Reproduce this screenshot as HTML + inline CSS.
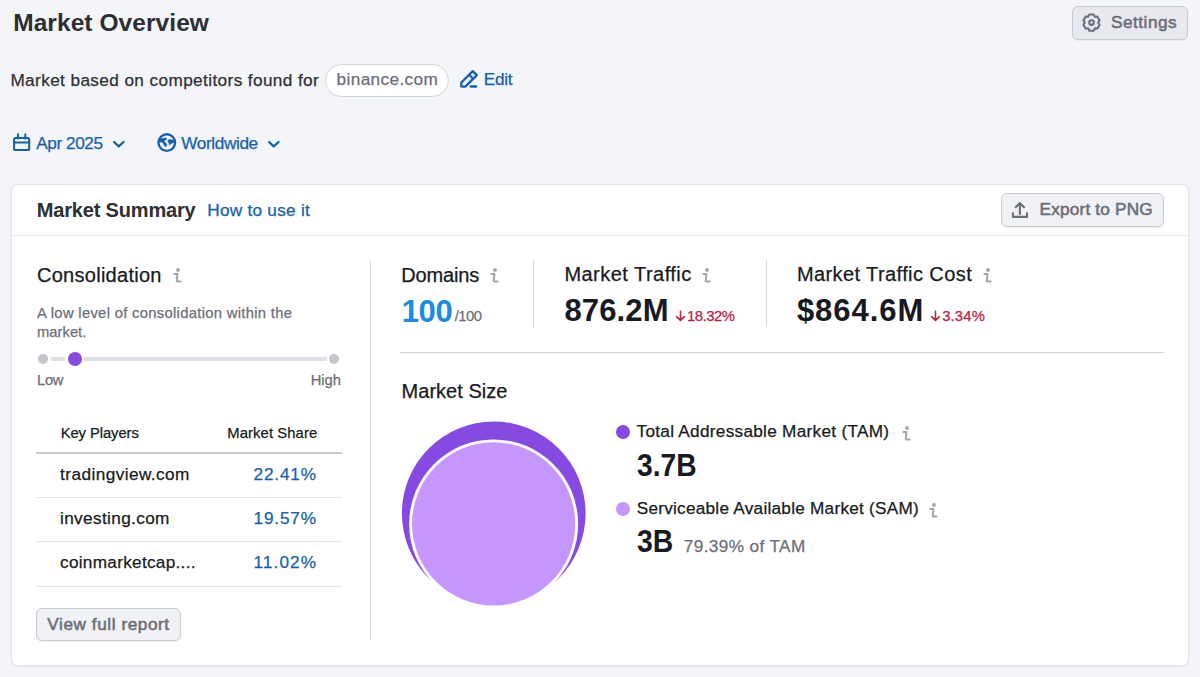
<!DOCTYPE html>
<html><head><meta charset="utf-8"><style>
html,body{margin:0;padding:0;}
body{width:1200px;height:677px;overflow:hidden;background:#f4f5f9;position:relative;font-family:"Liberation Sans",sans-serif;}
.t{position:absolute;white-space:nowrap;-webkit-text-stroke:0.25px currentColor;}
.box{position:absolute;box-sizing:border-box;}
.ic{position:absolute;overflow:visible;}
.btn{border:1px solid #c8cad1;border-radius:6px;background:#f0f1f4;box-shadow:0 1px 1px rgba(0,0,0,0.05);}
.card{background:#fff;border:1px solid #e4e5ea;border-radius:7px;box-shadow:0 1px 2px rgba(0,0,0,0.08);}
</style></head><body>
<div class="t" style="left:13.20px;top:10.66px;font-size:24.5px;line-height:24.5px;letter-spacing:0.068px;color:#2e2f33;font-weight:700;-webkit-text-stroke:0;">Market Overview</div>
<div class="t" style="left:10.40px;top:72.34px;font-size:17.2px;line-height:17.2px;letter-spacing:0.393px;color:#2e3034;">Market based on competitors found for</div>
<div class="box" style="left:325px;top:64px;width:124px;height:33px;border-radius:17px;border:1px solid #d3d5dc;background:#fff"></div>
<div class="t" style="left:336.60px;top:71.24px;font-size:17.2px;line-height:17.2px;letter-spacing:0.370px;color:#6c6e79;">binance.com</div>
<div class="t" style="left:483.80px;top:71.24px;font-size:17.2px;line-height:17.2px;letter-spacing:-0.283px;color:#1461ab;">Edit</div>
<div class="t" style="left:36.25px;top:134.69px;font-size:17.2px;line-height:17.2px;letter-spacing:-0.436px;color:#1461ab;">Apr 2025</div>
<div class="t" style="left:181.25px;top:134.69px;font-size:17.2px;line-height:17.2px;letter-spacing:-0.375px;color:#1461ab;">Worldwide</div>
<div class="box btn" style="left:1072px;top:6px;width:116px;height:34px;background:#e8e9ee"></div>
<div class="t" style="left:1111.00px;top:13.94px;font-size:17.2px;line-height:17.2px;letter-spacing:0.507px;color:#6c6e79;-webkit-text-stroke:0.55px currentColor;">Settings</div>
<div class="box card" style="left:11px;top:183.5px;width:1177.5px;height:482px;"></div>
<div class="box" style="left:12.5px;top:235px;width:1174.5px;height:1px;background:#e3e4ea"></div>
<div class="t" style="left:36.80px;top:200.17px;font-size:20px;line-height:20px;letter-spacing:-0.177px;color:#2e2f33;font-weight:700;-webkit-text-stroke:0;">Market Summary</div>
<div class="t" style="left:207.30px;top:201.74px;font-size:17.2px;line-height:17.2px;letter-spacing:0.258px;color:#1461ab;">How to use it</div>
<div class="box btn" style="left:1001px;top:193px;width:163px;height:34px;"></div>
<div class="t" style="left:1039.50px;top:200.94px;font-size:17.2px;line-height:17.2px;letter-spacing:0.200px;color:#6c6e79;-webkit-text-stroke:0.55px currentColor;">Export to PNG</div>
<div class="t" style="left:37.00px;top:265.07px;font-size:20px;line-height:20px;letter-spacing:0.275px;color:#171a22;">Consolidation</div>
<div class="t" style="left:37.00px;top:305.67px;font-size:14.8px;line-height:14.8px;letter-spacing:0.303px;color:#6c6e79;">A low level of consolidation within the</div>
<div class="t" style="left:37.00px;top:324.67px;font-size:14.8px;line-height:14.8px;letter-spacing:0.000px;color:#6c6e79;">market.</div>
<div class="t" style="left:37.00px;top:373.22px;font-size:14.8px;line-height:14.8px;letter-spacing:-0.300px;color:#6c6e79;">Low</div>
<div class="t" style="left:310.80px;top:372.97px;font-size:14.8px;line-height:14.8px;letter-spacing:-0.117px;color:#6c6e79;">High</div>
<div class="t" style="left:60.70px;top:426.47px;font-size:14.8px;line-height:14.8px;letter-spacing:-0.085px;color:#171a22;">Key Players</div>
<div class="t" style="left:227.30px;top:426.47px;font-size:14.8px;line-height:14.8px;letter-spacing:0.095px;color:#171a22;">Market Share</div>
<div class="t" style="left:60.00px;top:466.24px;font-size:17.2px;line-height:17.2px;letter-spacing:0.443px;color:#171a22;">tradingview.com</div>
<div class="t" style="left:253.50px;top:466.24px;font-size:17.2px;line-height:17.2px;letter-spacing:0.830px;color:#1461ab;">22.41%</div>
<div class="t" style="left:60.00px;top:510.24px;font-size:17.2px;line-height:17.2px;letter-spacing:0.362px;color:#171a22;">investing.com</div>
<div class="t" style="left:253.50px;top:510.24px;font-size:17.2px;line-height:17.2px;letter-spacing:0.830px;color:#1461ab;">19.57%</div>
<div class="t" style="left:60.00px;top:554.24px;font-size:17.2px;line-height:17.2px;letter-spacing:0.291px;color:#171a22;">coinmarketcap....</div>
<div class="t" style="left:253.50px;top:554.24px;font-size:17.2px;line-height:17.2px;letter-spacing:1.090px;color:#1461ab;">11.02%</div>
<div class="box btn" style="left:36px;top:607.5px;width:144.7px;height:33px;"></div>
<div class="t" style="left:47.30px;top:615.64px;font-size:17.2px;line-height:17.2px;letter-spacing:0.563px;color:#6c6e79;-webkit-text-stroke:0.55px currentColor;">View full report</div>
<div class="t" style="left:401.30px;top:265.17px;font-size:20px;line-height:20px;letter-spacing:-0.150px;color:#171a22;">Domains</div>
<div class="t" style="left:401.70px;top:295.56px;font-size:31px;line-height:31px;letter-spacing:-0.350px;color:#1a8de3;font-weight:700;-webkit-text-stroke:0;">100</div>
<div class="t" style="left:454.70px;top:309.27px;font-size:14.8px;line-height:14.8px;letter-spacing:-0.500px;color:#6c6e79;">/100</div>
<div class="t" style="left:564.40px;top:264.07px;font-size:20px;line-height:20px;letter-spacing:0.469px;color:#171a22;">Market Traffic</div>
<div class="t" style="left:564.40px;top:294.76px;font-size:31px;line-height:31px;letter-spacing:0.140px;color:#171a22;font-weight:700;-webkit-text-stroke:0;">876.2M</div>
<div class="t" style="left:686.90px;top:308.67px;font-size:14.8px;line-height:14.8px;letter-spacing:-0.420px;color:#b8213f;">18.32%</div>
<svg class="ic" style="left:674.8px;top:309.5px;" width="11" height="12" viewBox="0 0 11 12"><path d="M5.5 1.3 V10.3 M1.6 6.6 L5.5 10.4 L9.4 6.6" fill="none" stroke="#b8213f" stroke-width="1.5" stroke-linecap="round" stroke-linejoin="round"/></svg>
<div class="t" style="left:796.90px;top:264.07px;font-size:20px;line-height:20px;letter-spacing:0.408px;color:#171a22;">Market Traffic Cost</div>
<div class="t" style="left:796.90px;top:295.06px;font-size:31px;line-height:31px;letter-spacing:0.975px;color:#171a22;font-weight:700;-webkit-text-stroke:0;">$864.6M</div>
<div class="t" style="left:942.20px;top:308.67px;font-size:14.8px;line-height:14.8px;letter-spacing:0.162px;color:#b8213f;">3.34%</div>
<svg class="ic" style="left:929.8px;top:309.5px;" width="11" height="12" viewBox="0 0 11 12"><path d="M5.5 1.3 V10.3 M1.6 6.6 L5.5 10.4 L9.4 6.6" fill="none" stroke="#b8213f" stroke-width="1.5" stroke-linecap="round" stroke-linejoin="round"/></svg>
<div class="t" style="left:401.60px;top:381.07px;font-size:20px;line-height:20px;letter-spacing:0.020px;color:#171a22;">Market Size</div>
<div class="t" style="left:636.50px;top:423.14px;font-size:17.2px;line-height:17.2px;letter-spacing:0.286px;color:#171a22;">Total Addressable Market (TAM)</div>
<div class="t" style="left:637.00px;top:449.96px;font-size:31px;line-height:31px;letter-spacing:0.000px;color:#171a22;font-weight:700;-webkit-text-stroke:0;transform:scaleX(0.9099);transform-origin:0.00px 0;">3.7B</div>
<div class="t" style="left:636.70px;top:499.94px;font-size:17.2px;line-height:17.2px;letter-spacing:0.250px;color:#171a22;">Serviceable Available Market (SAM)</div>
<div class="t" style="left:636.70px;top:526.06px;font-size:31px;line-height:31px;letter-spacing:0.000px;color:#171a22;font-weight:700;-webkit-text-stroke:0;transform:scaleX(0.9155);transform-origin:0.00px 0;">3B</div>
<div class="t" style="left:683.80px;top:537.74px;font-size:17.2px;line-height:17.2px;letter-spacing:0.379px;color:#6c6e79;">79.39% of TAM</div>
<div class="box" style="left:370px;top:260.5px;width:1.4px;height:379.5px;background:#d4d6dc"></div>
<div class="box" style="left:533px;top:260.4px;width:1.2px;height:67px;background:#d4d6dc"></div>
<div class="box" style="left:766px;top:260.4px;width:1.2px;height:67px;background:#d4d6dc"></div>
<div class="box" style="left:400px;top:352px;width:764px;height:1.2px;background:#d2d4da"></div>
<div class="box" style="left:36px;top:452.2px;width:305.5px;height:1.8px;background:#c9cbd2"></div>
<div class="box" style="left:36px;top:497px;width:305.5px;height:1px;background:#e3e4ea"></div>
<div class="box" style="left:36px;top:541.3px;width:305.5px;height:1px;background:#e3e4ea"></div>
<div class="box" style="left:36px;top:585.8px;width:305.5px;height:1px;background:#e3e4ea"></div>
<div class="box" style="left:50.5px;top:356.8px;width:14.2px;height:3.9px;background:#dfe0e6"></div>
<div class="box" style="left:84.3px;top:356.8px;width:242.9px;height:3.9px;background:#dfe0e6"></div>
<div class="box" style="left:38.2px;top:353.8px;width:9.8px;height:9.8px;border-radius:50%;background:#c4c6ce"></div>
<div class="box" style="left:329.1px;top:353.90000000000003px;width:9.8px;height:9.8px;border-radius:50%;background:#c4c6ce"></div>
<div class="box" style="left:67.80000000000001px;top:351.59999999999997px;width:14.2px;height:14.2px;border-radius:50%;background:#8649e1"></div>
<svg class="ic" style="left:171.6px;top:266.4px;" width="12" height="18" viewBox="0 0 12 18"><circle cx="6" cy="4" r="1.9" fill="#a3a5ad"/><path d="M2.4 7.9 H5.5 L4.7 14.5 Q4.6 15.4 5.5 15.4 H8.6" fill="none" stroke="#a3a5ad" stroke-width="2" stroke-linecap="round" stroke-linejoin="round"/></svg>
<svg class="ic" style="left:489.1px;top:265.79999999999995px;" width="12" height="18" viewBox="0 0 12 18"><circle cx="6" cy="4" r="1.9" fill="#a3a5ad"/><path d="M2.4 7.9 H5.5 L4.7 14.5 Q4.6 15.4 5.5 15.4 H8.6" fill="none" stroke="#a3a5ad" stroke-width="2" stroke-linecap="round" stroke-linejoin="round"/></svg>
<svg class="ic" style="left:701.1px;top:265.79999999999995px;" width="12" height="18" viewBox="0 0 12 18"><circle cx="6" cy="4" r="1.9" fill="#a3a5ad"/><path d="M2.4 7.9 H5.5 L4.7 14.5 Q4.6 15.4 5.5 15.4 H8.6" fill="none" stroke="#a3a5ad" stroke-width="2" stroke-linecap="round" stroke-linejoin="round"/></svg>
<svg class="ic" style="left:982.1px;top:265.79999999999995px;" width="12" height="18" viewBox="0 0 12 18"><circle cx="6" cy="4" r="1.9" fill="#a3a5ad"/><path d="M2.4 7.9 H5.5 L4.7 14.5 Q4.6 15.4 5.5 15.4 H8.6" fill="none" stroke="#a3a5ad" stroke-width="2" stroke-linecap="round" stroke-linejoin="round"/></svg>
<svg class="ic" style="left:900.5px;top:423.7px;" width="12" height="18" viewBox="0 0 12 18"><circle cx="6" cy="4" r="1.9" fill="#a3a5ad"/><path d="M2.4 7.9 H5.5 L4.7 14.5 Q4.6 15.4 5.5 15.4 H8.6" fill="none" stroke="#a3a5ad" stroke-width="2" stroke-linecap="round" stroke-linejoin="round"/></svg>
<svg class="ic" style="left:928.4px;top:500.5px;" width="12" height="18" viewBox="0 0 12 18"><circle cx="6" cy="4" r="1.9" fill="#a3a5ad"/><path d="M2.4 7.9 H5.5 L4.7 14.5 Q4.6 15.4 5.5 15.4 H8.6" fill="none" stroke="#a3a5ad" stroke-width="2" stroke-linecap="round" stroke-linejoin="round"/></svg>
<svg class="ic" style="left:380px;top:400px;" width="230" height="230" viewBox="0 0 230 230"><circle cx="113.75" cy="113.35" r="91.85" fill="#8649e1"/><circle cx="113.65" cy="123.9" r="84.5" fill="#fff"/><circle cx="113.65" cy="123.9" r="81.6" fill="#c596fd"/></svg>
<div class="box" style="left:616.1px;top:424.9px;width:14.2px;height:14.2px;border-radius:50%;background:#8649e1"></div>
<div class="box" style="left:616.3px;top:502.2px;width:14.2px;height:14.2px;border-radius:50%;background:#c596fd"></div>
<svg class="ic" style="left:8px;top:128px;" width="30" height="30" viewBox="0 0 30 30"><rect x="6.1" y="9.9" width="15.1" height="12.2" rx="1.6" fill="none" stroke="#1461ab" stroke-width="2"/><path d="M6.1 14.6 H21.2 M10 6.3 V10.5 M17.3 6.3 V10.5" fill="none" stroke="#1461ab" stroke-width="2" stroke-linecap="round"/></svg>
<svg class="ic" style="left:108px;top:132px;" width="22" height="22" viewBox="0 0 22 22"><path d="M6.1 10 L10.7 14.3 L15.6 10" fill="none" stroke="#1461ab" stroke-width="2.3" stroke-linecap="round" stroke-linejoin="round"/></svg>
<svg class="ic" style="left:263px;top:132px;" width="22" height="22" viewBox="0 0 22 22"><path d="M6.1 10 L10.7 14.3 L15.6 10" fill="none" stroke="#1461ab" stroke-width="2.3" stroke-linecap="round" stroke-linejoin="round"/></svg>
<svg class="ic" style="left:152px;top:128px;" width="30" height="30" viewBox="0 0 30 30"><circle cx="14.8" cy="14.6" r="8.35" fill="none" stroke="#1461ab" stroke-width="2.3"/><path d="M7.3 11.5 L10.1 10.3 L14.3 10.1 L14.7 11 L12.2 13.3 L13.6 14.7 L14.9 16.5 L14 19 L12.6 17.9 L11.5 15.8 L10.1 14.3 L6.9 14 Z" fill="#1461ab" stroke="#1461ab" stroke-width="0.4" stroke-linejoin="round"/><path d="M15.4 13.3 L16.8 11.5 L19.7 11.7 L22.9 12.2 L22.1 14.3 L18.6 16.1 L17.5 17.2 L16.8 14.7 Z" fill="#1461ab" stroke="#1461ab" stroke-width="0.4" stroke-linejoin="round"/></svg>
<svg class="ic" style="left:455px;top:65px;" width="30" height="30" viewBox="0 0 30 30"><path d="M6.3 21.6 V17.5 L17.8 6.1 L21.8 10.1 L10.3 21.6 Z M14.2 9.8 L18.1 13.7" fill="none" stroke="#1461ab" stroke-width="2.3" stroke-linejoin="round"/><path d="M15.7 21.5 H21.2" fill="none" stroke="#1461ab" stroke-width="2.3" stroke-linecap="round"/></svg>
<svg class="ic" style="left:1076px;top:8px;" width="30" height="30" viewBox="0 0 30 30"><path d="M12.15 8.80 L13.33 6.49 L17.67 6.49 L18.85 8.80 L18.85 8.80 L21.44 8.66 L23.61 12.43 L22.20 14.60 L22.20 14.60 L23.61 16.77 L21.44 20.54 L18.85 20.40 L18.85 20.40 L17.67 22.71 L13.33 22.71 L12.15 20.40 L12.15 20.40 L9.56 20.54 L7.39 16.77 L8.80 14.60 L8.80 14.60 L7.39 12.43 L9.56 8.66 L12.15 8.80 Z" fill="none" stroke="#6c6e79" stroke-width="2.1" stroke-linejoin="round"/><circle cx="15.5" cy="14.6" r="2.3" fill="none" stroke="#6c6e79" stroke-width="2.1"/></svg>
<svg class="ic" style="left:1005px;top:195px;" width="30" height="30" viewBox="0 0 30 30"><path d="M14.85 19 V8.2 M10.7 12.2 L14.85 8 L19 12.2 M7.9 18.3 V21.9 H22 V18.3" fill="none" stroke="#6c6e79" stroke-width="2.1" stroke-linecap="round" stroke-linejoin="round"/></svg>
</body></html>
